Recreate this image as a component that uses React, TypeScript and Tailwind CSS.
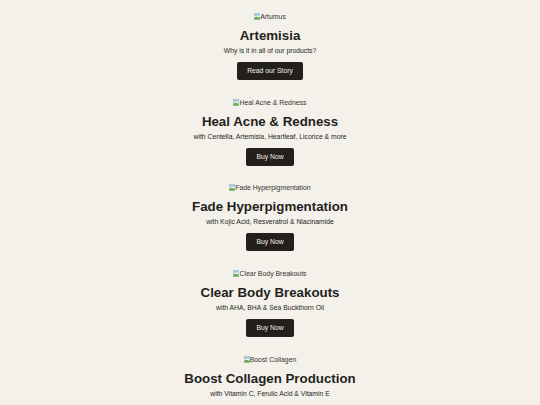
import React from "react";

const sections = [
  { alt: "Artumus", title: "Artemisia", sub: "Why is it in all of our products?", cta: "Read our Story" },
  { alt: "Heal Acne & Redness", title: "Heal Acne & Redness", sub: "with Centella, Artemisia, Heartleaf, Licorice & more", cta: "Buy Now" },
  { alt: "Fade Hyperpigmentation", title: "Fade Hyperpigmentation", sub: "with Kojic Acid, Resveratrol & Niacinamide", cta: "Buy Now" },
  { alt: "Clear Body Breakouts", title: "Clear Body Breakouts", sub: "with AHA, BHA & Sea Buckthorn Oil", cta: "Buy Now" },
  { alt: "Boost Collagen", title: "Boost Collagen Production", sub: "with Vitamin C, Ferulic Acid & Vitamin E", cta: "Buy Now" },
];

function BrokenIcon() {
  return (
    <svg width="6" height="7" viewBox="0 0 12 14" className="shrink-0">
      <rect x="0.5" y="0.5" width="11" height="13" fill="#ffffff" stroke="#9a9a9a" />
      <path d="M1 6 L11 5 L11 1 L1 1 Z" fill="#9cc7e8" />
      <path d="M1 13 L1 9 L5 7 L9 9 L11 8 L11 13 Z" fill="#5fae4e" />
    </svg>
  );
}

export default function App() {
  return (
    <div
      className="min-h-screen bg-[#f4f1ea] text-[#231f1c] pt-[12px] flex flex-col items-center"
      style={{ fontFamily: '"Liberation Sans", Arial, sans-serif' }}
    >
      {sections.map((s, i) => (
        <div key={i} className="flex flex-col items-center pb-[17.7px]">
          <div className="flex items-center h-[9px] text-[6.9px] leading-[9px] text-[#333]">
            <BrokenIcon />
            <span>{s.alt}</span>
          </div>
          <h2 className="mt-[7px] text-[13.3px] leading-[16px] font-bold">{s.title}</h2>
          <p className="mt-[2px] text-[6.8px] leading-[9px]">{s.sub}</p>
          <button className="mt-[7px] h-[18px] px-[10px] rounded-[2px] bg-[#221f1c] text-[#f4f1ea] text-[6.8px] leading-[18px]">
            {s.cta}
          </button>
        </div>
      ))}
    </div>
  );
}
